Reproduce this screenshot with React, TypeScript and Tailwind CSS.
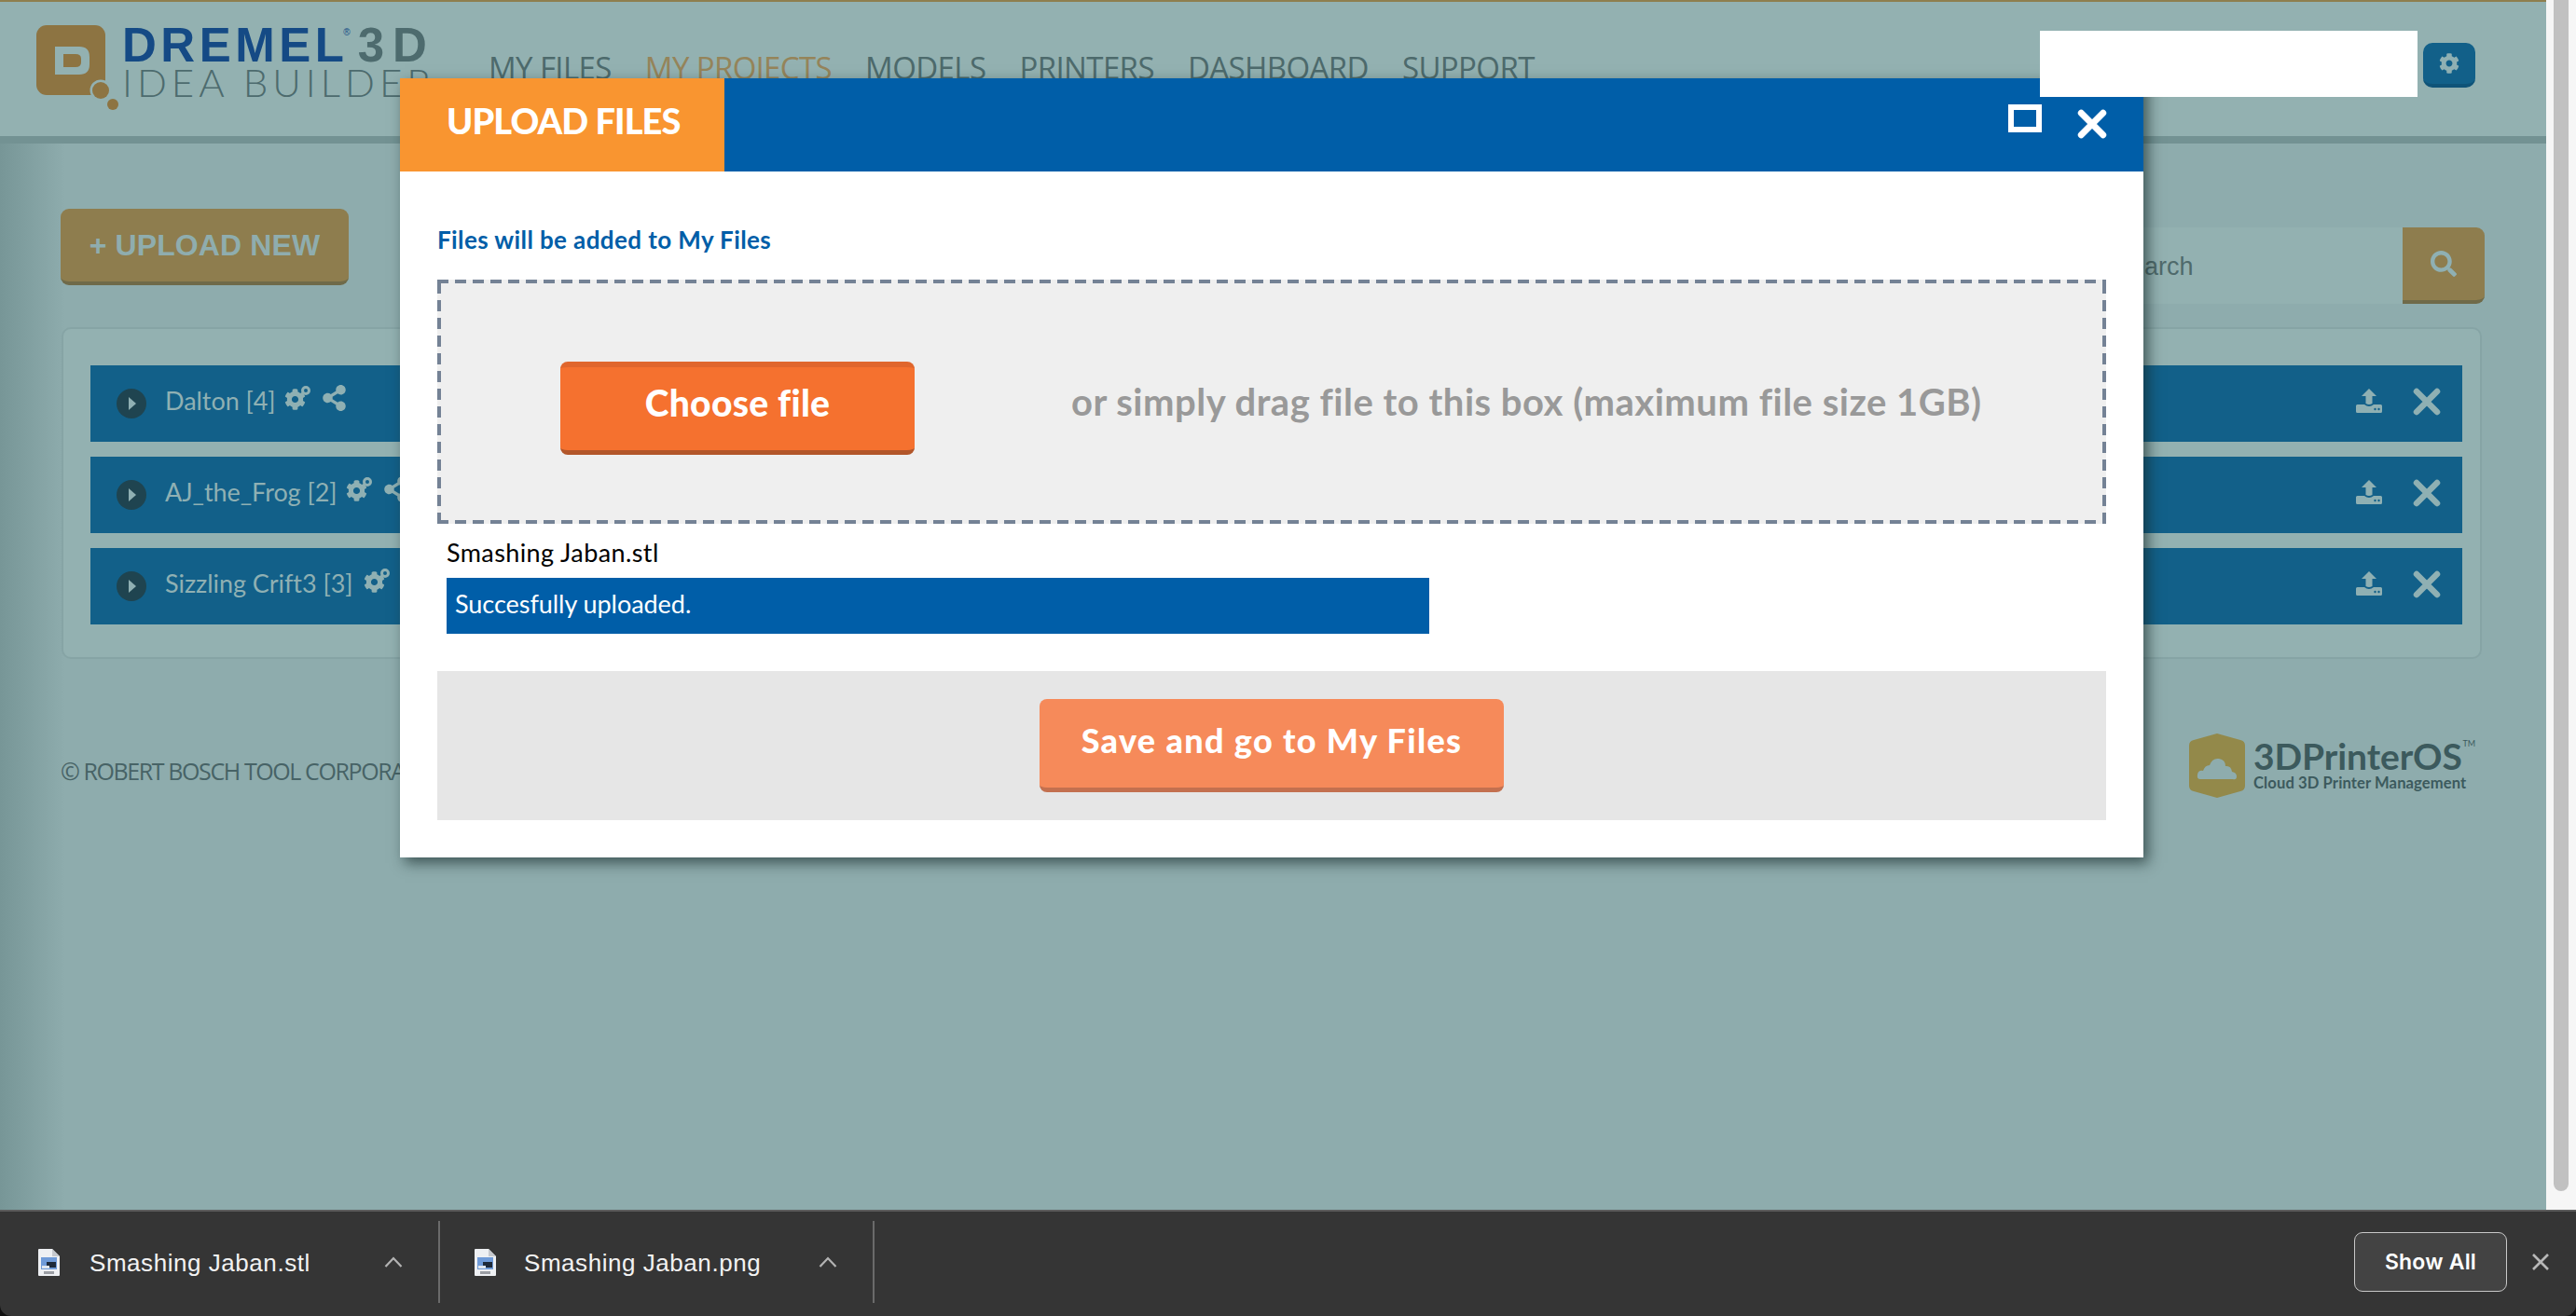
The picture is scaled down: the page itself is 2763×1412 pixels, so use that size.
import { FaCog, FaSearch, FaShareAlt } from 'react-icons/fa';

const navItems = ['MY FILES', 'MY PROJECTS', 'MODELS', 'PRINTERS', 'DASHBOARD', 'SUPPORT'];

const projects = [
  { name: 'Dalton [4]', gap: 'ml-[9px]' },
  { name: 'AJ_the_Frog [2]', gap: 'ml-[10px]' },
  { name: 'Sizzling Crift3 [3]', gap: 'ml-[11px]' },
];

function CloseIcon({ className }: { className: string }) {
  return (
    <svg viewBox="0 0 30 30" className={className}>
      <path d="M4 4 26 26M26 4 4 26" stroke="currentColor" strokeWidth="6.5" strokeLinecap="round" />
    </svg>
  );
}

function Cogs() {
  return (
    <span className="relative block w-[28px] h-[26px] shrink-0">
      <FaCog className="absolute left-0 bottom-0 w-[23px] h-[23px]" />
      <span className="absolute right-0 top-0 w-[10px] h-[10px] rounded-full border-[3px] border-[#8fb0b3]" />
    </span>
  );
}

function UploadIcon() {
  return (
    <svg viewBox="0 0 28 26" className="w-[28px] h-[26px] fill-[#8fb0b3]">
      <path d="M14 0 22 8H17.5V16Q14 18 10.5 16V8H6Z" />
      <path d="M1.5 17H9Q14 21 19 17H26.5Q28 17 28 18.5V24.5Q28 26 26.5 26H1.5Q0 26 0 24.5V18.5Q0 17 1.5 17Z" />
      <circle cx="20.5" cy="22" r="1.2" fill="#126089" />
      <circle cx="24.5" cy="22" r="1.2" fill="#126089" />
    </svg>
  );
}

function ProjectRow({ name, gap }: { name: string; gap: string }) {
  return (
    <div className="h-[82px] bg-[#126089] flex items-center pl-[28px] pr-[23px] text-[#8fb0b3]">
      <span className="w-[32px] h-[32px] rounded-full bg-[#1f4450] flex items-center justify-center shrink-0">
        <span className="w-0 h-0 border-y-[7px] border-y-transparent border-l-[8px] border-l-[#8fb0b3] ml-[1px]" />
      </span>
      <span className="ml-[20px] text-[27px] tracking-[-0.05px] font-['Lato',sans-serif] -mt-[6px]">{name}</span>
      <span className={`${gap} -mt-[12px]`}>
        <Cogs />
      </span>
      <FaShareAlt className="ml-[12px] -mt-[12px] w-[27px] h-[28px]" />
      <span className="ml-auto -mt-[6px]">
        <UploadIcon />
      </span>
      <CloseIcon className="ml-[33px] -mt-[4px] w-[30px] h-[30px]" />
    </div>
  );
}

function Logo() {
  return (
    <div className="flex items-start ml-[39px] mt-[25px] shrink-0">
      <svg viewBox="0 0 90 92" className="w-[90px] h-[92px] shrink-0">
        <rect x="0" y="0" width="74" height="75" rx="11" fill="#8d7442" />
        <circle cx="69" cy="70" r="11.5" fill="#93b1b1" />
        <circle cx="69" cy="70" r="9" fill="#8d7442" />
        <circle cx="82" cy="85" r="6" fill="#8d7442" />
        <path
          fillRule="evenodd"
          d="M20 23H46Q57 23 57 34V42Q57 53 46 53H20ZM29 31V45H42Q48 45 48 40V36Q48 31 42 31Z"
          fill="#93b1b1"
        />
      </svg>
      <div className="ml-[2px] flex flex-col">
        <div className="flex items-start h-[44px] leading-[44px] font-['Liberation_Sans',sans-serif] font-bold text-[51px] whitespace-nowrap">
          <span className="text-[#154a85] tracking-[4.5px]">DREMEL</span>
          <span className="-ml-[5px] text-[10px] leading-[16px] text-[#154a85] font-normal">®</span>
          <span className="ml-[8px] text-[#4d6b6e] tracking-[9px]">3D</span>
        </div>
        <span className="-mt-[5px] text-[42px] leading-[44px] tracking-[5px] text-[#4d6b6e] font-['Lato',sans-serif] font-light whitespace-nowrap">
          IDEA BUILDER
        </span>
      </div>
    </div>
  );
}

function PrinterOsLogo() {
  return (
    <div className="flex items-center shrink-0 -mt-[2px]">
      <svg viewBox="0 0 60 69" className="w-[60px] h-[69px]">
        <path d="M30 0 55 7Q60 8 60 13V56Q60 61 55 62L30 69 5 62Q0 61 0 56V13Q0 8 5 7Z" fill="#93894a" />
        <path d="M12 49Q8 49 9 44T15 40Q17 34 22 34 25 26 32 27 39 28 39 35 45 34 46 41 51 42 51 46T47 49Z" fill="#8eacad" />
      </svg>
      <div className="ml-[9px] -mt-[4px] w-[238px] flex flex-col text-[#3c5a5d] font-['Lato',sans-serif] font-bold">
        <span className="relative text-[39px] leading-[40px] tracking-[-0.1px]">
          3DPrinterOS
          <span className="absolute right-0 top-[2px] text-[9px] leading-[10px] font-normal">TM</span>
        </span>
        <span className="text-[16.6px] leading-[18px] tracking-[0.1px] whitespace-nowrap">Cloud 3D Printer Management</span>
      </div>
    </div>
  );
}

function UploadModal() {
  return (
    <div className="absolute left-[429px] top-[84px] z-10 w-[1870px] h-[836px] bg-white flex flex-col shadow-[5px_6px_14px_rgba(20,40,40,0.65)] font-['Lato',sans-serif]">
      <div className="h-[100px] bg-[#005ea8] flex shrink-0">
        <div className="w-[348px] bg-[#f99530] flex items-center pl-[50px] pb-[10px] text-white font-black text-[38px] tracking-[-0.9px]">
          UPLOAD FILES
        </div>
        <span className="ml-auto mt-[28px] w-[36px] h-[30px] border-[6px] border-white" />
        <CloseIcon className="ml-[38px] mt-[33px] mr-[39px] w-[32px] h-[32px] text-white" />
      </div>

      <div className="px-[40px] flex flex-col flex-1">
        <p className="mt-[57px] h-[32px] text-[26px] leading-[32px] font-bold text-[#005ea8] tracking-[0.4px]">Files will be added to My Files</p>
        <div className="mt-[27px] h-[262px] flex items-center pl-[132px] [background:repeating-linear-gradient(90deg,#748295_0_12px,transparent_12px_19px)_top/100%_4px_no-repeat,repeating-linear-gradient(90deg,#748295_0_12px,transparent_12px_19px)_bottom/100%_4px_no-repeat,repeating-linear-gradient(0deg,#748295_0_12px,transparent_12px_19px)_left/4px_100%_no-repeat,repeating-linear-gradient(0deg,#748295_0_12px,transparent_12px_19px)_right/4px_100%_no-repeat,#efefef]">
          <button className="mt-[14px] pb-[12px] w-[380px] h-[100px] rounded-[8px] bg-[#f5712f] border-t-[6px] border-t-[#e0662d] border-b-[5px] border-b-[#b2562a] text-white font-black text-[39px] tracking-[0.3px] shrink-0">
            Choose file
          </button>
          <span className="ml-[168px] text-[40px] font-bold text-[#999999] whitespace-nowrap tracking-[0.5px]">
            or simply drag file to this box (maximum file size 1GB)
          </span>
        </div>
        <p className="mt-[15px] ml-[10px] h-[32px] text-[27px] leading-[32px] text-black tracking-[0.4px]">Smashing Jaban.stl</p>
        <div className="mt-[11px] ml-[10px] w-[1054px] h-[60px] bg-[#005ea8] flex items-center pl-[9px] pb-[4px] text-white text-[27px] tracking-[-0.05px]">
          Succesfully uploaded.
        </div>
        <div className="mt-[40px] h-[160px] bg-[#e6e6e6] flex items-center justify-center">
          <button className="w-[498px] h-[100px] pb-[8px] rounded-[8px] bg-[#f68a5a] border-b-[5px] border-b-[#c3704f] text-white font-black text-[36px] tracking-[1.35px]">
            Save and go to My Files
          </button>
        </div>
      </div>
    </div>
  );
}

function FileIcon({ label }: { label: string }) {
  return (
    <svg viewBox="0 0 23 29" className="w-[23px] h-[29px] shrink-0">
      <path d="M0 1Q0 0 1 0H15L23 8V28Q23 29 22 29H1Q0 29 0 28Z" fill="#eef0f3" />
      <path d="M15 0 23 8H15Z" fill="#c6c9ce" />
      <rect x="3" y="9" width="17" height="13" fill="#6f9bd8" />
      <rect x="9" y="14" width="10" height="6" fill="#1e2a3a" />
      <rect x="4" y="18" width="8" height="3" fill="#dfe6ef" />
      <rect x="6" y="24" width="11" height="3" fill="#9a9da3" aria-label={label} />
    </svg>
  );
}

function DownloadItem({ name, label, width, gap }: { name: string; label: string; width: string; gap: string }) {
  return (
    <>
      <div className={`${width} flex items-center`}>
        <FileIcon label={label} />
        <span className={`${gap} mt-[2px] text-[26px] text-[#f2f2f2] font-['Liberation_Sans',sans-serif] tracking-[0.55px]`}>{name}</span>
        <svg viewBox="0 0 20 12" className="ml-auto mr-[38px] w-[20px] h-[12px]">
          <path d="M1.5 11 10 2l8.5 9" fill="none" stroke="#b3b3b3" strokeWidth="2.2" />
        </svg>
      </div>
      <span className="w-[2px] h-[88px] bg-[#6a6a6a]" />
    </>
  );
}

export default function App() {
  return (
    <div className="relative w-[2763px] h-[1412px] overflow-hidden bg-[#111] flex flex-col font-['Liberation_Sans',sans-serif]">
      <div className="h-[1298px] flex shrink-0">
        <div className="relative w-[2731px] bg-[#8eacad] flex flex-col">
          <div className="absolute inset-y-0 left-0 w-[70px] bg-gradient-to-r from-[#779697] to-transparent pointer-events-none" />

          <header className="relative h-[154px] shrink-0 bg-[#93b1b1] border-t-[2px] border-t-[#8e7f4e] border-b-[8px] border-b-[#739293] flex items-start">
            <Logo />
            <nav className="absolute left-[524px] top-[46px] flex gap-[36px] text-[33px] tracking-[-0.6px] font-['Open_Sans',sans-serif] text-[#4d6a6c] whitespace-nowrap">
              {navItems.map((item) => (
                <span key={item} className={item === 'MY PROJECTS' ? 'text-[#95845a]' : ''}>
                  {item}
                </span>
              ))}
            </nav>
            <div className="ml-auto mr-[76px] mt-[31px] flex items-start gap-[6px]">
              <div className="relative z-20 w-[405px] h-[71px] bg-white" />
              <button className="mt-[13px] w-[56px] h-[48px] rounded-[10px] bg-[#126089] border-b-[4px] border-b-[#0f5378] flex items-center justify-center text-[#8fb0b3]">
                <FaCog className="w-[22px] h-[22px]" />
              </button>
            </div>
          </header>

          <div className="relative flex items-start justify-between pl-[65px] pr-[66px] pt-[70px]">
            <button className="w-[309px] h-[82px] rounded-[9px] bg-[#8e7d4e] border-b-[4px] border-b-[#6f6a49] text-[#8fadae] font-bold text-[32px] tracking-[0.1px]">
              + UPLOAD NEW
            </button>
            <div className="mt-[20px] flex h-[82px]">
              <input
                readOnly
                placeholder="Search"
                className="w-[330px] h-[82px] bg-[#93b1b1] pl-[20px] pt-[2px] text-[27px] outline-none placeholder:text-[#4f6a6b]"
              />
              <button className="w-[88px] h-[82px] rounded-r-[9px] bg-[#8e7d4e] border-b-[4px] border-b-[#6f6a49] flex items-center justify-center text-[#8fb0b3]">
                <FaSearch className="w-[28px] h-[28px]" />
              </button>
            </div>
          </div>

          <section className="relative mt-[25px] mx-[66px] w-[2596px] h-[356px] rounded-[10px] border-[2px] border-[#86a4a5] bg-[#93b1b1] pt-[39px] pl-[29px] pr-[19px] flex flex-col gap-[16px]">
            {projects.map((project) => (
              <ProjectRow key={project.name} {...project} />
            ))}
          </section>

          <footer className="relative mt-[82px] pl-[65px] pr-[76px] flex items-start justify-between">
            <span className="mt-[23px] text-[25px] leading-[30px] tracking-[-1.4px] font-['Open_Sans',sans-serif] text-[#476366]">
              © ROBERT BOSCH TOOL CORPORATION
            </span>
            <PrinterOsLogo />
          </footer>

          <UploadModal />
        </div>

        <div className="relative w-[32px] bg-[#f6f6f6] px-[8px]">
          <div className="w-[16px] h-[1278px] rounded-b-[8px] bg-[#c1c1c1]" />
        </div>
      </div>

      <div className="relative h-[114px] bg-[#353535] border-t-[2px] border-t-[#5b5b5b] rounded-b-[12px] flex items-center pl-[41px] pr-[29px] pb-[4px]">
        <DownloadItem name="Smashing Jaban.stl" label="STL" width="w-[429px]" gap="ml-[32px]" />
        <span className="w-[37px]" />
        <DownloadItem name="Smashing Jaban.png" label="PNG" width="w-[427px]" gap="ml-[30px]" />
        <button className="ml-auto w-[164px] h-[64px] rounded-[9px] border-[1.5px] border-[#c8c8c8] bg-[#434343] text-white text-[23px] font-semibold font-['Inter',sans-serif] tracking-[0.2px]">
          Show All
        </button>
        <svg viewBox="0 0 18 18" className="ml-[27px] w-[18px] h-[18px]">
          <path d="M1 1 17 17M17 1 1 17" stroke="#b8b8b8" strokeWidth="2.6" />
        </svg>
      </div>
    </div>
  );
}
